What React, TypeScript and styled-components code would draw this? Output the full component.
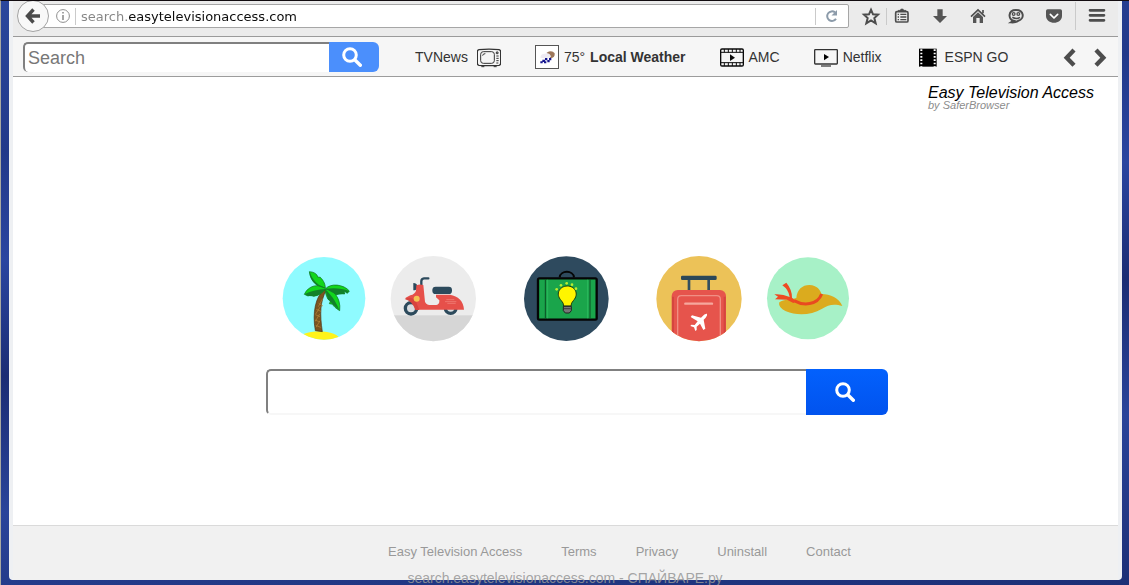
import React from 'react';
import styled, { createGlobalStyle } from 'styled-components';

const Global = createGlobalStyle`
  * { box-sizing: border-box; }
  body { margin: 0; font-family: "Liberation Sans", Arial, sans-serif; color: #333; }
  button { border: 0; padding: 0; margin: 0; background: none; cursor: pointer; font: inherit; }
  input { font: inherit; margin: 0; }
  a { color: inherit; text-decoration: none; }
  svg { display: block; flex: none; }
`;

const Desktop = styled.div`
  position: relative;
  display: flex;
  height: 100vh;
  padding: 0 7px 5px 8px;
  overflow: hidden;
  border-top: 1px solid #120c10;
  border-left: 1px solid #a8a8a0;
  background: linear-gradient(175deg, #2b479c 0%, #22398a 22%, #2a45a0 38%, #1b2d74 55%, #2a449a 75%, #1c2f76 100%);
`;

const Window = styled.div`
  display: flex;
  flex-direction: column;
  flex: 1;
  min-width: 0;
  border: solid #eef0f3;
  border-width: 0 4px;
  border-radius: 0 0 4px 4px;
  background: #fff;
  overflow: hidden;
`;

const BrowserBar = styled.header`
  display: flex;
  align-items: center;
  height: 36px;
  padding: 0 6px 5px 4px;
  border-bottom: 1px solid #9a9a9a;
  background: #ebebeb;
`;

const BackButton = styled.button`
  z-index: 1;
  flex: none;
  width: 32px;
  height: 32px;
  border: 1px solid #a3a3a3;
  border-radius: 50%;
  background: #f8f8f8;
  display: grid;
  place-items: center;
`;

const AddressBar = styled.div`
  flex: 1;
  display: flex;
  align-items: center;
  height: 24px;
  margin: 0 7px 0 -6px;
  padding: 0 5px 0 12px;
  border: 1px solid #a6a6a6;
  border-radius: 0 2px 2px 0;
  background: #fff;
`;

const AddressInput = styled.input`
  flex: 1;
  min-width: 0;
  height: 20px;
  padding: 0;
  border: 0;
  outline: 0;
  font: 13px "DejaVu Sans", sans-serif;
  color: transparent;
  background: linear-gradient(90deg, #858585 46px, #0c0c0c 46px);
  background-clip: text;
  -webkit-background-clip: text;
`;

const Divider = styled.span<{ $tall?: boolean }>`
  flex: none;
  width: 1px;
  height: ${p => (p.$tall ? 28 : 17)}px;
  margin: ${p => (p.$tall ? '0 6px' : '0')};
  background: #cacaca;
`;

const AddressDivider = styled(Divider)`
  margin: 0 5px;
`;

const BarButtons = styled.div`
  display: flex;
  gap: 8px;
`;

const BarButton = styled.button`
  width: 30px;
  height: 24px;
  display: grid;
  place-items: center;
`;

const ReloadButton = styled(BarButton)`
  width: 22px;
`;

const Toolbar = styled.div`
  display: flex;
  align-items: center;
  height: 40px;
  padding: 0 6px 0 10px;
  border-bottom: 1px solid #9c9c9c;
  background: #f6f6f6;
`;

const SearchForm = styled.form<{ $large?: boolean }>`
  display: flex;
  flex: none;
  width: ${p => (p.$large ? 622 : 356)}px;
  max-width: 100%;
  height: ${p => (p.$large ? 46 : 30)}px;
`;

const SearchInput = styled.input<{ $large?: boolean }>`
  flex: 1;
  min-width: 0;
  padding: 2px 3px 0;
  border: solid #808080;
  border-width: 2px 0 ${p => (p.$large ? '2px' : '0')} 2px;
  border-bottom-color: #f7f7f7;
  border-radius: 5px 0 0 5px;
  outline: 0;
  background: #fff;
  font-size: 18px;
  &::placeholder { color: #777; opacity: 1; }
`;

const SearchButton = styled.button<{ $large?: boolean }>`
  width: ${p => (p.$large ? 82 : 50)}px;
  padding-right: ${p => (p.$large ? 4 : 5)}px;
  border-radius: 0 6px 6px 0;
  background: ${p => (p.$large ? 'linear-gradient(#0361fd, #0153ee)' : '#4b8ffc')};
  display: grid;
  place-items: center;
`;

const Shortcuts = styled.nav`
  display: flex;
  align-items: center;
  flex: 1;
  gap: 34px;
  margin-left: 36px;
`;

const Shortcut = styled.a<{ $gap?: number }>`
  display: flex;
  align-items: center;
  gap: ${p => p.$gap ?? 5}px;
  font-size: 14px;
  line-height: 24px;
  white-space: nowrap;
`;

const Arrows = styled.div`
  display: flex;
  gap: 6px;
`;

const ArrowButton = styled.button`
  width: 24px;
  height: 24px;
`;

const Page = styled.main`
  display: flex;
  flex-direction: column;
  flex: 1;
`;

const Brand = styled.div`
  align-self: flex-end;
  width: 190px;
  padding-top: 9px;
  font-style: italic;
`;

const BrandName = styled.h1`
  margin: 0;
  font-size: 16px;
  font-weight: 400;
  line-height: 14px;
  color: #000;
  white-space: nowrap;
`;

const BrandBy = styled.p`
  margin: 0;
  font-size: 11px;
  line-height: 11px;
  color: #8c8c8c;
`;

const Pictures = styled.div`
  display: flex;
  justify-content: center;
  gap: 47px;
  margin-top: 145px;
`;

const Pair = styled.div`
  display: flex;
  gap: 23px;
`;

const SearchRow = styled.div`
  display: flex;
  justify-content: center;
  padding: 27px 0 0 22px;
`;

const Footer = styled.footer`
  display: flex;
  justify-content: center;
  gap: 39px;
  height: 55px;
  padding: 18px 0 0 108px;
  margin: 0 -4px;
  border-top: 1px solid #dadada;
  background: #f1f1f1;
  font-size: 13px;
  line-height: 16px;
  color: #999;
`;

const Watermark = styled.div`
  position: absolute;
  bottom: -1px;
  left: 0;
  right: 0;
  text-align: center;
  font-size: 14px;
  line-height: 16px;
  color: rgba(150, 150, 150, 0.85);
  pointer-events: none;
`;

const Magnifier = ({ size }: { size: number }) => (
  <svg width={size} height={size} viewBox="0 0 20 20" fill="none" stroke="#fff">
    <circle cx="8" cy="8" r="6.3" strokeWidth="3" />
    <path d="M13 13l5.3 5.3" strokeWidth="3.4" strokeLinecap="round" />
  </svg>
);

type IconProps = { box: string; children: React.ReactNode };
const Icon = ({ box, children }: IconProps) => (
  <svg width="24" height="24" viewBox={box} fill="none" stroke="#4d4d4d" aria-hidden="true">{children}</svg>
);

const PictureSvg = ({ box, label, children }: IconProps & { label: string }) => (
  <svg width="86" height="86" viewBox={box} role="img" aria-label={label}>{children}</svg>
);

const Palm = () => (
  <PictureSvg box="63 48 258 258" label="Palm tree">
    <clipPath id="palm"><circle cx="192" cy="175" r="124" /></clipPath>
    <g clipPath="url(#palm)">
      <rect x="63" y="48" width="258" height="258" fill="#8ffbff" />
      <ellipse cx="177" cy="300" rx="62" ry="26" fill="#fff31a" />
      <path d="M190 150C168 172 156 215 166 272L187 275C179 222 180 185 199 150Z" fill="#7b5420" stroke="#4b3316" strokeWidth="2" />
      <path d="M176 190l13 8M169 208l14 6M166 224l14 6M165 240l15 6M167 256l15 6M188 176l-13 24M181 200l-14 22M179 222l-13 22M180 242l-12 20" stroke="#b98a3b" strokeWidth="2" />
      <g fill="#12d61c" stroke="#0a6c18" strokeWidth="2" strokeLinejoin="round">
        <path d="M196 144C172 142 151 124 148 95C162 96 172 102 173 111L181 112C192 123 196 134 196 144Z" />
        <path d="M196 146C178 130 145 135 133 163L144 168L153 165L161 169C176 167 189 158 196 146Z" />
        <path d="M196 147C211 128 252 133 268 153L262 160L252 153L254 162L240 159L230 164C217 161 207 154 196 147Z" />
        <path d="M196 147C217 146 244 172 239 212C228 205 220 199 218 193L208 191L212 182L204 178C198 166 195 156 196 147Z" />
      </g>
      <g fill="#12802a">
        <path d="M196 144C174 137 158 121 149 96C149 122 171 142 196 144Z" />
        <path d="M196 147C175 149 153 152 134 163L144 168L161 169C176 167 189 158 196 147Z" />
        <path d="M197 147C220 143 247 145 267 153L262 160L252 153L254 162L230 164Z" />
        <path d="M196 148C212 164 227 182 238 211L218 193L204 178Z" />
      </g>
    </g>
  </PictureSvg>
);

const Scooter = () => (
  <PictureSvg box="393 48 258 258" label="Scooter">
    <clipPath id="scooter"><circle cx="523" cy="176" r="128" /></clipPath>
    <g clipPath="url(#scooter)">
      <rect x="390" y="45" width="264" height="264" fill="#ececec" />
      <rect x="390" y="226" width="264" height="84" fill="#d6d6d6" />
    </g>
    <g fill="#d9dde0" stroke="#2c4a5c" strokeWidth="10">
      <circle cx="456" cy="205" r="17" /><circle cx="575" cy="204" r="16" />
    </g>
    <path d="M508 115h-13q-8 1-8 9v10" fill="none" stroke="#2c4a5c" strokeWidth="7" strokeLinecap="round" />
    <path d="M463 129q12 0 12 11t-12 11z" fill="#2c4a5c" />
    <path d="M472 136q10-5 21-1l5 50q3 9 14 10h20q10-1 9-14l-10-9v-8h42c24 4 41 19 42 45h-137l-8-20-27-11q-5-2-3-5l14-7q14-4 17-14Z" fill="#e6504a" />
    <path d="M437 177q20-9 33 5l11 28h-12q-8-26-32-33Z" fill="#d8443f" />
    <circle cx="473" cy="176" r="9" fill="#f5c352" />
    <rect x="520" y="140" width="59" height="22" rx="10" fill="#2c4a5c" />
    <path d="M562 179h24M558 185h34M565 190h25" stroke="#f28b82" strokeWidth="2" />
  </PictureSvg>
);

const IdeaCase = () => (
  <PictureSvg box="75 48 258 258" label="Suitcase">
    <circle cx="205" cy="176" r="127" fill="#2e4a5e" />
    <path d="M185 112c2-22 41-22 43 0" fill="none" stroke="#050505" strokeWidth="6" />
    <rect x="120" y="115" width="176" height="124" rx="4" fill="#1aa54b" stroke="#050505" strokeWidth="7" />
    <path d="M142 119v116M276 119v116" stroke="#0a4f24" strokeWidth="3" />
    <path d="M149 119v116M269 119v116" stroke="#35c467" strokeWidth="2" />
    <path d="M197 198q0-9-7-16c-20-21-4-44 18-44s37 23 18 44q-7 7-7 16Z" fill="#fff500" stroke="#183d12" strokeWidth="3" />
    <path d="M196 199h24v13l-6 7h-12l-6-7Z" fill="#777" stroke="#222" strokeWidth="3" />
    <path d="M198 206h20" stroke="#222" strokeWidth="2" />
    <g fill="#b9ec30"><circle cx="176" cy="148" r="4" /><circle cx="189" cy="136" r="4" /><circle cx="206" cy="130" r="4" /><circle cx="222" cy="134" r="4" /><circle cx="234" cy="146" r="4" /></g>
  </PictureSvg>
);

const Luggage = () => (
  <PictureSvg box="471 48 258 258" label="Luggage">
    <clipPath id="luggage"><circle cx="600" cy="176" r="128" /></clipPath>
    <g clipPath="url(#luggage)">
      <rect x="468" y="45" width="264" height="264" fill="#ecc258" />
      <path d="M570 118v36M629 118v36" stroke="#34505f" strokeWidth="8" />
      <rect x="546" y="107" width="107" height="13" rx="4" fill="#2c4858" />
      <rect x="518" y="150" width="163" height="180" rx="18" fill="#e6544c" />
      <path d="M522 170v150M677 170v150" stroke="#d5453f" strokeWidth="6" />
      <path d="M536 310V178q0-11 11-11h106q11 0 11 11v132" fill="none" stroke="#f08f84" strokeWidth="4" />
      <path d="M559 191h80" stroke="#f6a79d" strokeWidth="7" strokeLinecap="round" />
      <path d="M624 221q-7-1-15 9l-3 3-27-7-4 5 21 13-9 11-10-1-3 4 11 4 4 11 4-3v-10l10-9 10 19 6-4-5-27 6-6q6-7 4-12Z" fill="#fff" />
    </g>
  </PictureSvg>
);

const Hat = () => (
  <PictureSvg box="795 48 258 258" label="Sun hat">
    <circle cx="924" cy="175" r="123" fill="#a7f1c7" />
    <path d="M838 187C852 177 874 180 889 174C891 149 907 135 928 135C952 136 960 150 965 162C990 162 1018 174 1027 198C1003 191 986 193 965 207C935 226 889 228 858 214C842 206 835 197 838 187Z" fill="#dbab1e" />
    <path d="M882 182C910 198 952 196 965 162" fill="none" stroke="#e94a20" strokeWidth="9" />
    <path d="M847 136l12-8q17 20 17 45l12 11-8 5-19-10-36-1 9-8-11-7q24-2 46 8-3-22-22-35Z" fill="#ee4a22" />
  </PictureSvg>
);

const App = () => (
  <Desktop>
    <Global />
    <Window>
      <BrowserBar>
        <BackButton aria-label="Back">
          <svg width="16" height="16" viewBox="0 0 16 16" fill="none" stroke="#4a4a4a" strokeWidth="3.4"><path d="M8.5 1.5L2.5 8l6 6.500M3 8h12" /></svg>
        </BackButton>
        <AddressBar>
          <svg width="14" height="14" viewBox="0 0 14 14" fill="none" stroke="#8f8f8f"><circle cx="7" cy="7" r="6.4" /><path d="M7 6v5M7 3v1.500" strokeWidth="1.600" /></svg>
          <AddressDivider />
          <AddressInput aria-label="Address" defaultValue="search.easytelevisionaccess.com" />
          <AddressDivider />
          <ReloadButton aria-label="Reload">
            <svg width="14" height="14" viewBox="0 0 14 14" fill="none" stroke="#8c9baa" strokeWidth="2"><path d="M11 9.800A4.800 4.800 0 1 1 10 3.400" /><path d="M12 1v5.500H6.500z" fill="#8c9baa" stroke="none" /></svg>
          </ReloadButton>
        </AddressBar>
        <BarButton aria-label="Bookmark this page">
          <Icon box="327 12 72 72"><path d="M363 29l6 14 15 1-11 10 4 16-14-9-14 9 4-16-11-10 15-1z" strokeWidth="6" /></Icon>
        </BarButton>
        <Divider />
        <BarButtons>
          <BarButton aria-label="Bookmarks list">
            <Icon box="421 12 72 72"><rect x="438" y="35" width="37" height="31" rx="4" strokeWidth="5" /><path d="M445 34v-3h6q1-5 6-5t6 5h6v3z" fill="#4d4d4d" /><path d="M444 43h4M444 51h4M444 59h4M452 43h18M452 51h18M452 59h18" strokeWidth="4" /></Icon>
          </BarButton>
          <BarButton aria-label="Downloads">
            <Icon box="534 12 72 72"><path d="M562 28h16v20h13l-21 21-21-21h13z" fill="#555" stroke="none" /></Icon>
          </BarButton>
          <BarButton aria-label="Home">
            <Icon box="648 12 72 72"><path d="M663 50l21-20 21 20M699 30v10" strokeWidth="5" /><path d="M669 51l15-14 15 14v18h-10V54h-10v15h-10z" fill="#555" stroke="none" /></Icon>
          </BarButton>
          <BarButton aria-label="Chat">
            <Icon box="761 12 72 72"><path d="M797 30c-25 0-24 29-7 32l-8 5q17 1 22-5c19-5 18-32-7-32z" strokeWidth="6" /><circle cx="790" cy="42" r="4" strokeWidth="4" /><circle cx="804" cy="42" r="4" strokeWidth="4" /><path d="M786 52q12 7 23 0" strokeWidth="5" /></Icon>
          </BarButton>
          <BarButton aria-label="Pocket">
            <Icon box="876 12 72 72"><path d="M893 28h38q5 0 5 5v14c0 28-48 28-48 0V33q0-5 5-5z" fill="#555" stroke="none" /><path d="M901 43l11 11 11-11" stroke="#fff" strokeWidth="5" strokeLinecap="round" strokeLinejoin="round" /></Icon>
          </BarButton>
        </BarButtons>
        <Divider $tall />
        <BarButton aria-label="Menu">
          <Icon box="1005 12 72 72"><path d="M1020 31h42M1020 46h42M1020 61h42" strokeWidth="8" strokeLinecap="round" /></Icon>
        </BarButton>
      </BrowserBar>

      <Toolbar>
        <SearchForm role="search" onSubmit={e => e.preventDefault()}>
          <SearchInput aria-label="Toolbar search" placeholder="Search" />
          <SearchButton aria-label="Search the web"><Magnifier size={20} /></SearchButton>
        </SearchForm>
        <Shortcuts>
          <Shortcut href="#tvnews" $gap={9}>
            TVNews
            <Icon box="291 46 72 72"><g stroke="#333"><path d="M297 60q30-3 60 0 5 1 5 6v35q0 5-5 6-30 2-60 0-5-1-5-6V66q0-5 5-6z" strokeWidth="4" /><rect x="302" y="66" width="41" height="35" rx="8" strokeWidth="3" /><path d="M349 67h5v5h-5zM349 79h7M349 86h7M349 93h7M349 100h6M308 78q0-6 8-6M304 111h9M341 111h9" strokeWidth="3" /></g></Icon>
          </Shortcut>
          <Shortcut href="#weather">
            <Icon box="462 46 72 72"><rect x="463.500" y="47.500" width="69" height="69" fill="#fff" stroke="#555" strokeWidth="3" /><path d="M497 69q16-9 24 2 2 13-13 15z" fill="#9c7659" stroke="none" /><path d="M478 84q1-12 13-12 15-5 19 9-12 7-32 3z" fill="#eeeaf2" stroke="none" /><path d="M484 90h8v7h-8zM492 85h7v7h-7zM504 85h7v7h-7zM478 95h7v6h-7zM489 95h7v6h-7zM499 91h7v7h-7z" fill="#15158f" stroke="none" /></Icon>
            <span>75°</span>
            <b>Local Weather</b>
          </Shortcut>
          <Shortcut href="#amc">
            <Icon box="1023 46 72 72"><g stroke="#0b0b0b"><rect x="1025" y="58" width="68" height="51" rx="4" strokeWidth="4" /><path d="M1025 68h68M1025 99h68" strokeWidth="3" /><path d="M1036 58v10M1048 58v10M1060 58v10M1072 58v10M1083 58v10M1036 99v10M1048 99v10M1060 99v10M1072 99v10M1083 99v10" strokeWidth="3" /><path d="M1053 74l15 10-15 10z" fill="#0b0b0b" stroke="none" /></g></Icon>
            AMC
          </Shortcut>
          <Shortcut href="#netflix">
            <Icon box="192 135 72 72"><rect x="194" y="149" width="68" height="43" rx="2" stroke="#333" strokeWidth="4" /><path d="M213 198h30" stroke="#666" strokeWidth="5" /><path d="M222 162l15 9-15 10z" fill="#000" stroke="none" /></Icon>
            Netflix
          </Shortcut>
          <Shortcut href="#espn">
            <Icon box="495 136 72 72"><path d="M504 147h53v54h-53z" fill="#000" stroke="none" /><path d="M511 149v52M551 149v52" stroke="#fff" strokeWidth="6" strokeDasharray="5 5" /></Icon>
            ESPN GO
          </Shortcut>
        </Shortcuts>
        <Arrows>
          <ArrowButton aria-label="Previous"><Icon box="924 136 72 72"><path d="M972 151l-22 23 22 23" strokeWidth="13" /></Icon></ArrowButton>
          <ArrowButton aria-label="Next"><Icon box="1014 136 72 72"><path d="M1038 151l22 23-22 23" strokeWidth="13" /></Icon></ArrowButton>
        </Arrows>
      </Toolbar>

      <Page>
        <Brand>
          <BrandName>Easy Television Access</BrandName>
          <BrandBy>by SaferBrowser</BrandBy>
        </Brand>
        <Pictures>
          <Pair><Palm /><Scooter /></Pair>
          <IdeaCase />
          <Pair><Luggage /><Hat /></Pair>
        </Pictures>
        <SearchRow>
          <SearchForm $large role="search" onSubmit={e => e.preventDefault()}>
            <SearchInput $large aria-label="Search" />
            <SearchButton $large aria-label="Search"><Magnifier size={20} /></SearchButton>
          </SearchForm>
        </SearchRow>
      </Page>

      <Footer>
        <a href="#about">Easy Television Access</a>
        <a href="#terms">Terms</a>
        <a href="#privacy">Privacy</a>
        <a href="#uninstall">Uninstall</a>
        <a href="#contact">Contact</a>
      </Footer>
    </Window>
    <Watermark>search.easytelevisionaccess.com - СПАЙВАРЕ.ру</Watermark>
  </Desktop>
);

export default App;
